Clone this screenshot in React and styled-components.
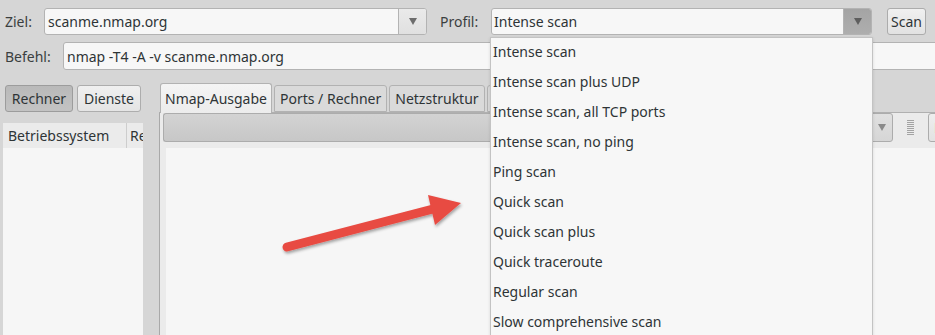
import styled, { createGlobalStyle } from "styled-components";

const GlobalStyle = createGlobalStyle`
  html, body {
    margin: 0;
    padding: 0;
  }
  body {
    background: #d6d6d6;
    font-family: "Noto Sans", "DejaVu Sans", sans-serif;
    font-size: 14px;
    color: #2e3436;
  }
`;

const Window = styled.div`
  position: relative;
  width: 935px;
  height: 335px;
  overflow: hidden;
  background: #d6d6d6;
  display: flex;
  flex-direction: column;
`;

const Row = styled.div`
  display: flex;
  align-items: center;
  flex-shrink: 0;
  padding-left: 5px;
  height: ${(p) => p.$h}px;
  margin-top: ${(p) => p.$top}px;
`;

const Label = styled.div`
  box-sizing: border-box;
  width: ${(p) => p.$w}px;
  padding-left: ${(p) => p.$pad || 0}px;
  flex-shrink: 0;
  color: #3b3f40;
`;

const Combo = styled.div`
  display: flex;
  flex-shrink: 0;
  width: ${(p) => p.$w}px;
  height: 100%;
  box-sizing: border-box;
  border: 1px solid #b3b3b3;
  border-radius: 3px;
  background: #f7f7f7;
  overflow: hidden;
`;

const ComboText = styled.div`
  flex: 1;
  display: flex;
  align-items: center;
  padding-left: ${(p) => p.$pad || 3}px;
`;

const ComboButton = styled.div`
  width: 27px;
  display: flex;
  align-items: center;
  justify-content: center;
  border-left: 1px solid #b3b3b3;
  background: ${(p) =>
    p.$pressed ? "linear-gradient(#a4a4a4, #aeaeae)" : "linear-gradient(#eaeaea, #e0e0e0)"};
`;

const Button = styled.div`
  display: flex;
  align-items: center;
  flex-shrink: 0;
  box-sizing: border-box;
  height: 27px;
  padding: 0 3px;
  margin-left: ${(p) => p.$ml || 0}px;
  border: 1px solid #acacac;
  border-radius: 3px;
  background: linear-gradient(#f0f0f0, #e2e2e2);
`;

const Entry = styled.div`
  display: flex;
  align-items: center;
  flex-shrink: 0;
  width: 900px;
  height: 100%;
  box-sizing: border-box;
  padding-left: 3px;
  border: 1px solid #b3b3b3;
  border-radius: 3px;
  background: #f7f7f7;
`;

const Main = styled.div`
  display: flex;
  flex: 1;
  margin-top: 13px;
  padding-left: 3px;
  min-height: 0;
`;

const LeftPanel = styled.div`
  width: 140px;
  flex-shrink: 0;
  display: flex;
  flex-direction: column;
`;

const ToggleRow = styled.div`
  display: flex;
  gap: 4px;
  margin-top: 2px;
  padding-left: 2px;
`;

const Toggle = styled.div`
  display: flex;
  align-items: center;
  justify-content: center;
  box-sizing: border-box;
  width: ${(p) => p.$w}px;
  height: 27px;
  border: 1px solid ${(p) => (p.$active ? "#9c9c9c" : "#adadad")};
  border-radius: 3px;
  background: ${(p) =>
    p.$active ? "linear-gradient(#b9b9b9, #c3c3c3)" : "linear-gradient(#f0f0f0, #e4e4e4)"};
`;

const ListHeader = styled.div`
  display: flex;
  height: 25px;
  margin-top: 11px;
  background: #ebebeb;
  overflow: hidden;
`;

const HeaderCell = styled.div`
  display: flex;
  align-items: center;
  flex-shrink: 0;
  width: ${(p) => p.$w}px;
  padding-left: ${(p) => p.$pad}px;
  box-sizing: border-box;
  border-right: ${(p) => (p.$sep ? "1px solid #cdcdcd" : "none")};
  white-space: nowrap;
`;

const ListBody = styled.div`
  flex: 1;
  background: #f6f6f6;
`;

const Notebook = styled.div`
  display: flex;
  flex-direction: column;
  flex-shrink: 0;
  width: 800px;
  margin-left: 16px;
`;

const TabStrip = styled.div`
  display: flex;
  align-items: flex-end;
  gap: 2px;
  height: 30px;
  padding-left: 1px;
  margin-bottom: -1px;
`;

const Tab = styled.div`
  display: flex;
  align-items: center;
  box-sizing: border-box;
  height: ${(p) => (p.$active ? 30 : 27)}px;
  margin-bottom: ${(p) => (p.$active ? 0 : 1)}px;
  padding: 0 ${(p) => (p.$active ? 4 : 5)}px;
  border: 1px solid #b2b2b2;
  border-bottom: ${(p) => (p.$active ? "none" : "1px solid #b2b2b2")};
  border-radius: 3px 3px 0 0;
  background: ${(p) => (p.$active ? "linear-gradient(#f4f4f4, #ececec)" : "#dadada")};
  white-space: nowrap;
  position: relative;
  z-index: ${(p) => (p.$active ? 1 : 0)};
`;

const Panel = styled.div`
  flex: 1;
  display: flex;
  flex-direction: column;
  padding-left: 3px;
  border-top: 1px solid #b0b0b0;
  border-left: 1px solid #a9a9a9;
  background: #ebebeb;
`;

const Toolbar = styled.div`
  display: flex;
  align-items: center;
  height: 29px;
`;

const ToolCombo = styled.div`
  display: flex;
  width: 730px;
  height: 29px;
  box-sizing: border-box;
  flex-shrink: 0;
`;

const ToolComboMain = styled.div`
  flex: 1;
  border: 1px solid #acacac;
  border-right: none;
  border-radius: 3px 0 0 3px;
  background: linear-gradient(#d3d3d3, #c7c7c7);
`;

const ToolComboArrow = styled.div`
  width: 20px;
  display: flex;
  align-items: center;
  justify-content: center;
  border: 1px solid #acacac;
  border-radius: 0 3px 3px 0;
  background: linear-gradient(#e0e0e0, #d6d6d6);
`;

const Handle = styled.div`
  display: flex;
  margin: 0 14px;
`;

const DetailsButton = styled.div`
  display: flex;
  align-items: center;
  box-sizing: border-box;
  height: 29px;
  padding: 0 5px;
  border: 1px solid #acacac;
  border-radius: 3px;
  background: linear-gradient(#eeeeee, #e2e2e2);
`;

const Output = styled.div`
  flex: 1;
  margin: 6px 0 0 3px;
  background: #f6f6f6;
`;

const Menu = styled.div`
  position: absolute;
  top: 37px;
  left: 490px;
  width: 383px;
  bottom: -2px;
  box-sizing: border-box;
  border: 1px solid #c3c3c3;
  background: #f7f7f7;
  box-shadow: 0 1px 3px rgba(0, 0, 0, 0.12);
  z-index: 5;
`;

const MenuItem = styled.div`
  height: 30px;
  line-height: 27px;
  padding-left: 2px;
  box-sizing: border-box;
  white-space: nowrap;
`;

const Annotation = styled.svg`
  position: absolute;
  left: 0;
  top: 0;
  pointer-events: none;
  z-index: 4;
`;

const DownArrow = ({ color = "#6d6d6d" }) => (
  <svg width="8" height="7" viewBox="0 0 8 7">
    <polygon points="0,0 8,0 4,7" fill={color} />
  </svg>
);

const profiles = [
  "Intense scan",
  "Intense scan plus UDP",
  "Intense scan, all TCP ports",
  "Intense scan, no ping",
  "Ping scan",
  "Quick scan",
  "Quick scan plus",
  "Quick traceroute",
  "Regular scan",
  "Slow comprehensive scan",
];

const App = () => {
  return (
    <>
      <GlobalStyle />
      <Window>
        <Row $h={27} $top={8}>
          <Label $w={39}>Ziel:</Label>
          <Combo $w={383}>
            <ComboText>scanme.nmap.org</ComboText>
            <ComboButton>
              <DownArrow />
            </ComboButton>
          </Combo>
          <Label $w={64} $pad={13}>
            Profil:
          </Label>
          <Combo $w={381}>
            <ComboText $pad={2}>Intense scan</ComboText>
            <ComboButton $pressed>
              <DownArrow color="#5e5e5e" />
            </ComboButton>
          </Combo>
          <Button $ml={15}>Scan</Button>
        </Row>

        <Row $h={28} $top={7}>
          <Label $w={58}>Befehl:</Label>
          <Entry>nmap -T4 -A -v scanme.nmap.org</Entry>
        </Row>

        <Main>
          <LeftPanel>
            <ToggleRow>
              <Toggle $w={68} $active>
                Rechner
              </Toggle>
              <Toggle $w={64}>Dienste</Toggle>
            </ToggleRow>
            <ListHeader>
              <HeaderCell $w={124} $pad={5} $sep>
                Betriebssystem
              </HeaderCell>
              <HeaderCell $w={60} $pad={3}>
                Rechner
              </HeaderCell>
            </ListHeader>
            <ListBody />
          </LeftPanel>

          <Notebook>
            <TabStrip>
              <Tab $active>Nmap-Ausgabe</Tab>
              <Tab>Ports / Rechner</Tab>
              <Tab>Netzstruktur</Tab>
              <Tab>Rechnerdetails</Tab>
              <Tab>Scans</Tab>
            </TabStrip>
            <Panel>
              <Toolbar>
                <ToolCombo>
                  <ToolComboMain />
                  <ToolComboArrow>
                    <DownArrow color="#8a8a8a" />
                  </ToolComboArrow>
                </ToolCombo>
                <Handle>
                  <svg width="7" height="15" viewBox="0 0 7 15">
                    {[0, 2, 4, 6, 8, 10, 12, 14].map((y) => (
                      <rect key={y} x="0" y={y} width="7" height="1" fill="#a3a3a3" />
                    ))}
                  </svg>
                </Handle>
                <DetailsButton>Einzelheiten</DetailsButton>
              </Toolbar>
              <Output />
            </Panel>
          </Notebook>
        </Main>

        <Menu>
          {profiles.map((p) => (
            <MenuItem key={p}>{p}</MenuItem>
          ))}
        </Menu>

        <Annotation width="935" height="335" viewBox="0 0 935 335">
          <defs>
            <filter id="shadow" x="-20%" y="-50%" width="140%" height="200%">
              <feDropShadow dx="1" dy="2" stdDeviation="1.5" floodColor="#000" floodOpacity="0.35" />
            </filter>
          </defs>
          <g filter="url(#shadow)">
            <line
              x1="287"
              y1="247"
              x2="433"
              y2="209"
              stroke="#e84b43"
              strokeWidth="9"
              strokeLinecap="round"
            />
            <polygon points="428,195 461,203 435,225" fill="#e84b43" />
          </g>
        </Annotation>
      </Window>
    </>
  );
};

export default App;
